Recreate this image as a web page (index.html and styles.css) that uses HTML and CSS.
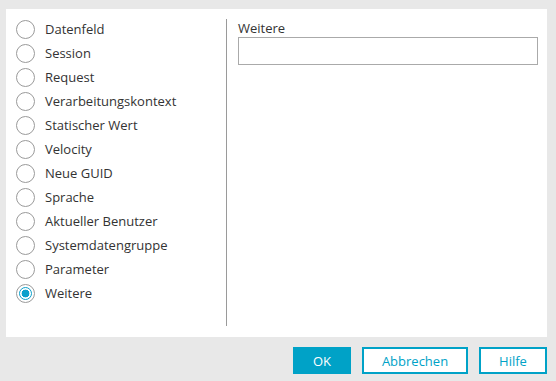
FILE: index.html
```html
<!DOCTYPE html>
<html>
<head>
<meta charset="utf-8">
<link rel="stylesheet" href="styles.css">
</head>
<body>
<div class="dialog">
  <div class="panel">
    <div class="options">
      <label class="opt"><span class="radio"></span><span>Datenfeld</span></label>
      <label class="opt"><span class="radio"></span><span>Session</span></label>
      <label class="opt"><span class="radio"></span><span>Request</span></label>
      <label class="opt"><span class="radio"></span><span>Verarbeitungskontext</span></label>
      <label class="opt"><span class="radio"></span><span>Statischer Wert</span></label>
      <label class="opt"><span class="radio"></span><span>Velocity</span></label>
      <label class="opt"><span class="radio"></span><span>Neue GUID</span></label>
      <label class="opt"><span class="radio"></span><span>Sprache</span></label>
      <label class="opt"><span class="radio"></span><span>Aktueller Benutzer</span></label>
      <label class="opt"><span class="radio"></span><span>Systemdatengruppe</span></label>
      <label class="opt"><span class="radio"></span><span>Parameter</span></label>
      <label class="opt"><span class="radio checked"></span><span>Weitere</span></label>
    </div>
    <div class="detail">
      <div class="field-label">Weitere</div>
      <div class="field-input"></div>
    </div>
  </div>
  <div class="buttons">
    <button class="btn primary">OK</button>
    <button class="btn wide">Abbrechen</button>
    <button class="btn">Hilfe</button>
  </div>
</div>
</body>
</html>
```

FILE: styles.css
```css
html, body {
  margin: 0;
  padding: 0;
  background: #e8e8e8;
  font-family: "Open Sans", "Noto Sans", sans-serif;
  font-size: 13px;
  color: #333;
}
.dialog {
  width: 556px;
  height: 381px;
}
.panel {
  margin: 9px 9px 0 6px;
  height: 328px;
  background: #fff;
  display: flex;
}
.options {
  width: 220px;
  padding-top: 8px;
  display: flex;
  flex-direction: column;
}
.opt {
  height: 24px;
  display: flex;
  align-items: center;
  padding-left: 10px;
  gap: 10px;
}
.radio {
  width: 17px;
  height: 17px;
  border: 1px solid #9a9a9a;
  border-radius: 50%;
  box-sizing: content-box;
  position: relative;
  background: #fff;
}
.radio.checked::after {
  content: "";
  position: absolute;
  left: 2px;
  top: 2px;
  width: 11px;
  height: 11px;
  border: 1px solid #0aa0cc;
  border-radius: 50%;
  background: radial-gradient(circle, #0aa0cc 0 3.6px, #fff 4.2px);
}
.detail {
  flex: 1;
  margin: 10px 0 11px 0;
  border-left: 1px solid #9a9a9a;
  padding: 0 9px 0 11px;
}
.field-label {
  height: 18px;
  line-height: 18px;
}
.field-input {
  height: 26px;
  border: 1px solid #aaa;
}
.buttons {
  display: flex;
  justify-content: flex-end;
  gap: 11px;
  margin: 10px 9px 0 0;
}
.btn {
  height: 27px;
  width: 68px;
  border: 2px solid #00a2c7;
  background: #fff;
  color: #00a2c7;
  font-family: "Open Sans", "Noto Sans", sans-serif;
  font-size: 13px;
  padding: 0;
  box-sizing: border-box;
}
.btn.primary {
  width: 58px;
  background: #00a2c7;
  color: #fff;
}
.btn.wide {
  width: 106px;
}
```
